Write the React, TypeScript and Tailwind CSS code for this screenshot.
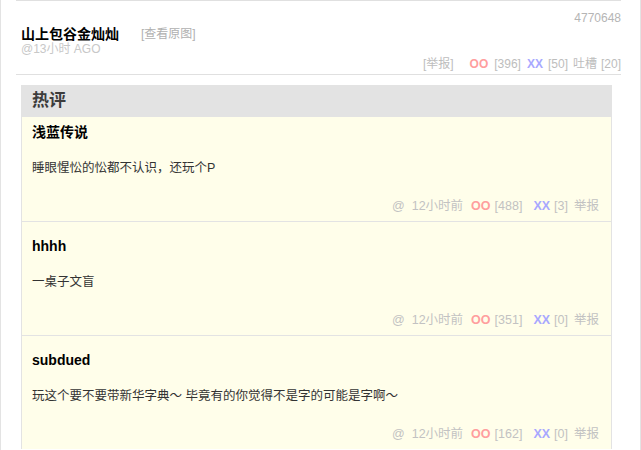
const comments = [
  { name: "浅蓝传说", text: "睡眼惺忪的忪都不认识，还玩个P", oo: 488, xx: 3 },
  { name: "hhhh", text: "一桌子文盲", oo: 351, xx: 0 },
  { name: "subdued", text: "玩这个要不要带新华字典～ 毕竟有的你觉得不是字的可能是字啊～", oo: 162, xx: 0 },
];

export default function App() {
  return (
    <div
      className="w-[641px] h-[450px] overflow-hidden bg-white border-l border-r border-[#e3e3e3] pl-[15px] pr-[19px]"
      style={{ fontFamily: '"Liberation Sans", "Noto Sans CJK SC", sans-serif' }}
    >
      {/* post header */}
      <div className="border-t border-b border-[#e0e0e0]">
        <div className="h-[16px] mt-[9px] text-right text-[12px] leading-[16px] text-[#b5b5b5]">4770648</div>
        <div className="h-[16px] pl-[5px] flex items-center leading-[16px]">
          <span className="text-[14px] font-bold text-black">山上包谷金灿灿</span>
          <span className="ml-[22px] text-[12px] text-[#b0b0b0]">[查看原图]</span>
        </div>
        <div className="h-[14px] pl-[5px] text-[12px] leading-[14px] text-[#c8c8c8]">@13小时 AGO</div>
        <div className="h-[16px] mb-[2px] flex justify-end items-center text-[12px] leading-[16px] text-[#bdbdbd]">
          <span>[举报]</span>
          <span className="ml-[16px] font-bold text-[#ff9e9e]">OO</span>
          <span className="ml-[6px]">[396]</span>
          <span className="ml-[6px] font-bold text-[#a8a8ff]">XX</span>
          <span className="ml-[5px]">[50]</span>
          <span className="ml-[5px]">吐槽</span>
          <span className="ml-[4px]">[20]</span>
        </div>
      </div>

      {/* hot comments */}
      <div className="mt-[10px] ml-[5px] w-[591px]">
        <div className="h-[32px] bg-[#e3e3e3] pl-[11px] flex items-center text-[17px] font-bold text-[#3c3c3c]">热评</div>
        <div className="bg-[#fffeea] border-l border-r border-[#e3e3e3]">
          {comments.map((c, i) => (
            <div
              key={c.name}
              className={`px-[10px] pb-[5px] ${i === 0 ? "pt-[5px]" : "pt-[14px] border-t border-[#e3e3e3]"}`}
            >
              <div className="h-[20px] leading-[20px] text-[14px] font-bold text-black">{c.name}</div>
              <div className="mt-[16px] h-[20px] leading-[20px] text-[12.5px] text-[#333]">{c.text}</div>
              <div className="mt-[18px] h-[20px] pr-[2px] flex justify-end items-center text-[12.5px] text-[#c2c2c2]">
                <span>@&nbsp; 12小时前</span>
                <span className="ml-[8px] font-bold text-[#ff9e9e]">OO</span>
                <span className="ml-[4px]">[{c.oo}]</span>
                <span className="ml-[11px] font-bold text-[#a8a8ff]">XX</span>
                <span className="ml-[4px]">[{c.xx}]</span>
                <span className="ml-[6px]">举报</span>
              </div>
            </div>
          ))}
        </div>
      </div>
    </div>
  );
}
